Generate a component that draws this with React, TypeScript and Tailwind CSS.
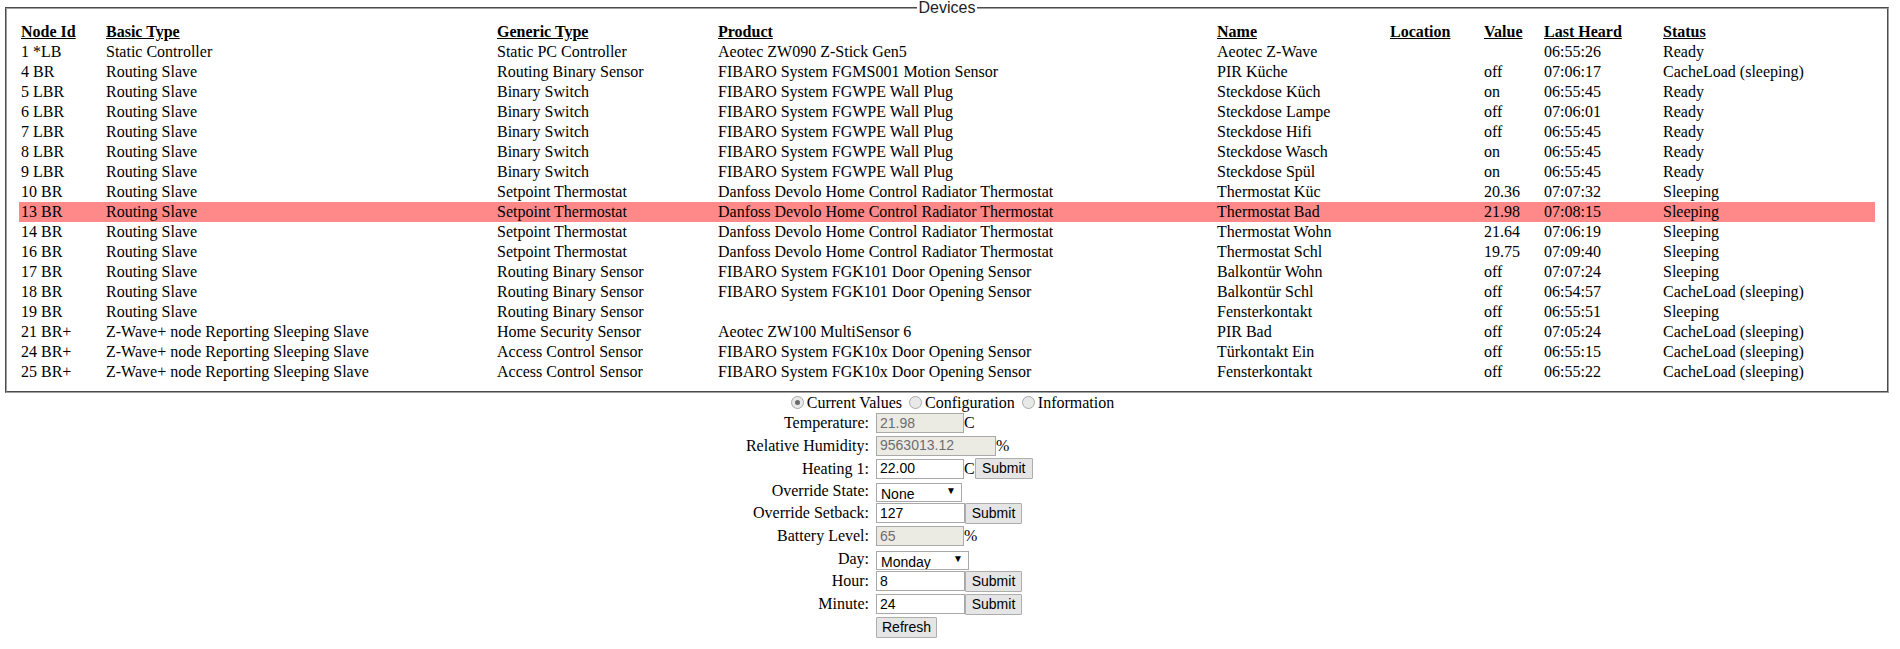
import type { ReactNode } from 'react';
import clsx from 'clsx';

type Device = [string, string, string, string, string, string, string, string, string];

const devices: Device[] = [
  ['1 *LB', 'Static Controller', 'Static PC Controller', 'Aeotec ZW090 Z-Stick Gen5', 'Aeotec Z-Wave', '', '', '06:55:26', 'Ready'],
  ['4 BR', 'Routing Slave', 'Routing Binary Sensor', 'FIBARO System FGMS001 Motion Sensor', 'PIR Küche', '', 'off', '07:06:17', 'CacheLoad (sleeping)'],
  ['5 LBR', 'Routing Slave', 'Binary Switch', 'FIBARO System FGWPE Wall Plug', 'Steckdose Küch', '', 'on', '06:55:45', 'Ready'],
  ['6 LBR', 'Routing Slave', 'Binary Switch', 'FIBARO System FGWPE Wall Plug', 'Steckdose Lampe', '', 'off', '07:06:01', 'Ready'],
  ['7 LBR', 'Routing Slave', 'Binary Switch', 'FIBARO System FGWPE Wall Plug', 'Steckdose Hifi', '', 'off', '06:55:45', 'Ready'],
  ['8 LBR', 'Routing Slave', 'Binary Switch', 'FIBARO System FGWPE Wall Plug', 'Steckdose Wasch', '', 'on', '06:55:45', 'Ready'],
  ['9 LBR', 'Routing Slave', 'Binary Switch', 'FIBARO System FGWPE Wall Plug', 'Steckdose Spül', '', 'on', '06:55:45', 'Ready'],
  ['10 BR', 'Routing Slave', 'Setpoint Thermostat', 'Danfoss Devolo Home Control Radiator Thermostat', 'Thermostat Küc', '', '20.36', '07:07:32', 'Sleeping'],
  ['13 BR', 'Routing Slave', 'Setpoint Thermostat', 'Danfoss Devolo Home Control Radiator Thermostat', 'Thermostat Bad', '', '21.98', '07:08:15', 'Sleeping'],
  ['14 BR', 'Routing Slave', 'Setpoint Thermostat', 'Danfoss Devolo Home Control Radiator Thermostat', 'Thermostat Wohn', '', '21.64', '07:06:19', 'Sleeping'],
  ['16 BR', 'Routing Slave', 'Setpoint Thermostat', 'Danfoss Devolo Home Control Radiator Thermostat', 'Thermostat Schl', '', '19.75', '07:09:40', 'Sleeping'],
  ['17 BR', 'Routing Slave', 'Routing Binary Sensor', 'FIBARO System FGK101 Door Opening Sensor', 'Balkontür Wohn', '', 'off', '07:07:24', 'Sleeping'],
  ['18 BR', 'Routing Slave', 'Routing Binary Sensor', 'FIBARO System FGK101 Door Opening Sensor', 'Balkontür Schl', '', 'off', '06:54:57', 'CacheLoad (sleeping)'],
  ['19 BR', 'Routing Slave', 'Routing Binary Sensor', '', 'Fensterkontakt', '', 'off', '06:55:51', 'Sleeping'],
  ['21 BR+', 'Z-Wave+ node Reporting Sleeping Slave', 'Home Security Sensor', 'Aeotec ZW100 MultiSensor 6', 'PIR Bad', '', 'off', '07:05:24', 'CacheLoad (sleeping)'],
  ['24 BR+', 'Z-Wave+ node Reporting Sleeping Slave', 'Access Control Sensor', 'FIBARO System FGK10x Door Opening Sensor', 'Türkontakt Ein', '', 'off', '06:55:15', 'CacheLoad (sleeping)'],
  ['25 BR+', 'Z-Wave+ node Reporting Sleeping Slave', 'Access Control Sensor', 'FIBARO System FGK10x Door Opening Sensor', 'Fensterkontakt', '', 'off', '06:55:22', 'CacheLoad (sleeping)'],
];

const columns = [
  { title: 'Node Id', width: 'w-[85px]' },
  { title: 'Basic Type', width: 'w-[391px]' },
  { title: 'Generic Type', width: 'w-[221px]' },
  { title: 'Product', width: 'w-[499px]' },
  { title: 'Name', width: 'w-[173px]' },
  { title: 'Location', width: 'w-[94px]' },
  { title: 'Value', width: 'w-[60px]' },
  { title: 'Last Heard', width: 'w-[119px]' },
  { title: 'Status', width: 'w-[214px]' },
];

const selectedNode = '13 BR';

function Radio({ checked, first, label }: { checked?: boolean; first?: boolean; label: string }) {
  return (
    <label className="flex items-center">
      <span
        className={clsx(
          'mr-[3px] flex h-[13px] w-[13px] items-center justify-center rounded-full border border-[#a9a9a9] bg-[#e8e8e8]',
          first ? 'ml-[5px]' : 'ml-[7px]',
        )}
      >
        {checked && <span className="h-[5px] w-[5px] rounded-full bg-[#6a6a6a]" />}
      </span>
      {label}
    </label>
  );
}

function FormRow({ label, height, children }: { label: string; height: string; children: ReactNode }) {
  return (
    <div className={clsx('flex items-center', height)}>
      <span className="w-[124px] text-right">{label}</span>
      <div className="ml-[7px] flex items-center">{children}</div>
    </div>
  );
}

function TextBox({ value, readOnly, width }: { value: string; readOnly?: boolean; width: string }) {
  return (
    <input
      defaultValue={value}
      readOnly={readOnly}
      className={clsx(
        "h-[20px] border border-[#a9a9a9] px-[3px] font-['Liberation_Sans',sans-serif] text-[14px] outline-none",
        width,
        readOnly ? 'bg-[#ebebe4] text-[#6d6d6d]' : 'bg-white text-black',
      )}
    />
  );
}

function Button({ children, width }: { children: ReactNode; width: string }) {
  return (
    <button
      type="button"
      className={clsx(
        "h-[21px] rounded-[1px] border border-[#adadad] bg-[#e5e5e5] font-['Liberation_Sans',sans-serif] text-[14px] leading-[19px] text-black",
        width,
      )}
    >
      {children}
    </button>
  );
}

function Dropdown({ value, width }: { value: string; width: string }) {
  return (
    <div className={clsx('relative h-[19px]', width)}>
      <select
        defaultValue={value}
        className="h-full w-full appearance-none border border-[#a9a9a9] bg-white pl-[4px] font-['Liberation_Sans',sans-serif] text-[14px] text-black outline-none"
      >
        <option>{value}</option>
      </select>
      <span className="pointer-events-none absolute right-[6px] top-[3px] text-[10px] leading-[12px] text-black">▼</span>
    </div>
  );
}

export default function App() {
  return (
    <div className="min-h-screen bg-white font-['Liberation_Serif',serif] text-[16px] text-black">
      <fieldset className="ml-[5px] mr-[11px] border-2 border-[#a0a0a0] px-3 pb-[9px] pt-[6px] [border-style:groove]">
        <legend className="mx-auto px-[2px] font-['Liberation_Sans',sans-serif] text-[16px] leading-4 text-[#222]">
          Devices
        </legend>
        <table className="w-full table-fixed border-collapse">
          <colgroup>
            {columns.map((c) => (
              <col key={c.title} className={c.width} />
            ))}
          </colgroup>
          <thead>
            <tr className="h-[20px]">
              {columns.map((c) => (
                <th key={c.title} className="px-[2px] py-0 text-left align-middle font-bold leading-[20px] underline">
                  {c.title}
                </th>
              ))}
            </tr>
          </thead>
          <tbody>
            {devices.map((d) => (
              <tr key={d[0]} className={clsx('h-[20px]', d[0] === selectedNode && 'bg-[#ff8888]')}>
                {d.map((cell, i) => (
                  <td key={i} className="truncate px-[2px] py-0 align-middle leading-[20px]">
                    {cell}
                  </td>
                ))}
              </tr>
            ))}
          </tbody>
        </table>
      </fieldset>

      <div className="flex h-[19px] items-center justify-center">
        <Radio checked first label="Current Values" />
        <Radio label="Configuration" />
        <Radio label="Information" />
      </div>

      <div className="mx-auto w-[410px]">
        <FormRow label="Temperature:" height="h-[22px]">
          <TextBox value="21.98" readOnly width="w-[88px]" />
          <span>C</span>
        </FormRow>
        <FormRow label="Relative Humidity:" height="h-[23px]">
          <TextBox value="9563013.12" readOnly width="w-[120px]" />
          <span>%</span>
        </FormRow>
        <FormRow label="Heating 1:" height="h-[23px]">
          <TextBox value="22.00" width="w-[88px]" />
          <span>C</span>
          <Button width="w-[58px]">Submit</Button>
        </FormRow>
        <FormRow label="Override State:" height="h-[22px]">
          <Dropdown value="None" width="w-[86px]" />
        </FormRow>
        <FormRow label="Override Setback:" height="h-[22px]">
          <TextBox value="127" width="w-[89px]" />
          <Button width="w-[57px]">Submit</Button>
        </FormRow>
        <FormRow label="Battery Level:" height="h-[24px]">
          <TextBox value="65" readOnly width="w-[88px]" />
          <span>%</span>
        </FormRow>
        <FormRow label="Day:" height="h-[22px]">
          <Dropdown value="Monday" width="w-[93px]" />
        </FormRow>
        <FormRow label="Hour:" height="h-[22px]">
          <TextBox value="8" width="w-[89px]" />
          <Button width="w-[57px]">Submit</Button>
        </FormRow>
        <FormRow label="Minute:" height="h-[24px]">
          <TextBox value="24" width="w-[89px]" />
          <Button width="w-[57px]">Submit</Button>
        </FormRow>
        <FormRow label="" height="h-[22px]">
          <Button width="w-[61px]">Refresh</Button>
        </FormRow>
      </div>
    </div>
  );
}
